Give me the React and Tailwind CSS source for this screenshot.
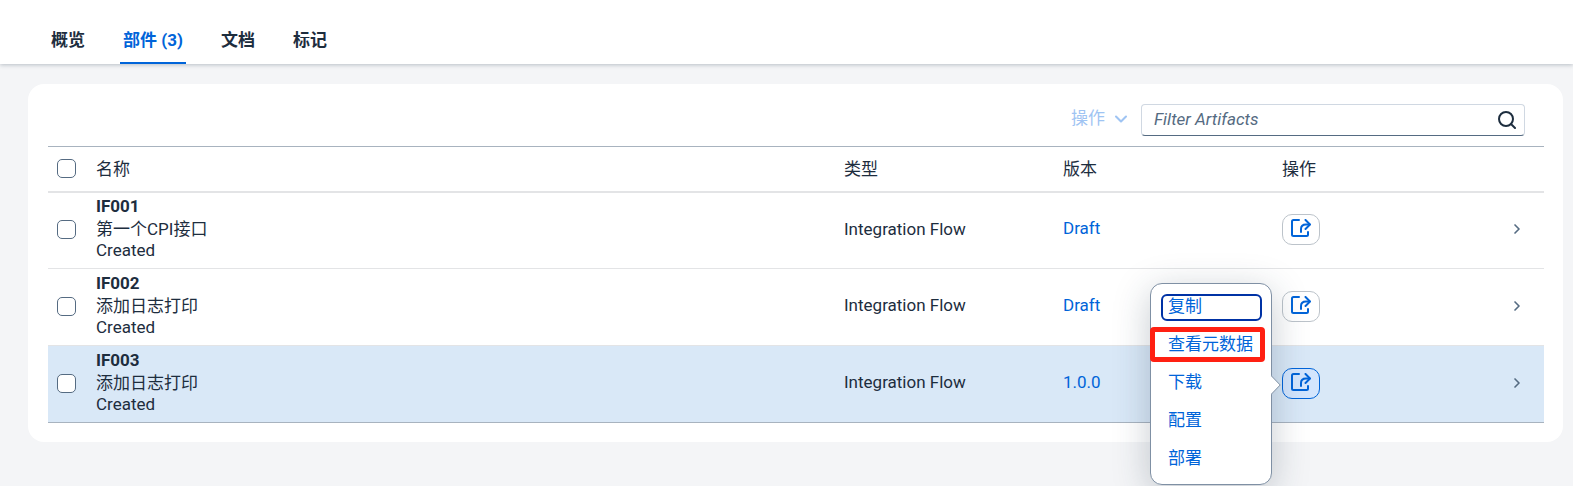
import React, { useState } from "react";
import { ChevronDown, ChevronRight } from "lucide-react";

const tabs = [
  { id: "overview", label: "概览" },
  { id: "artifacts", label: "部件 (3)" },
  { id: "documents", label: "文档" },
  { id: "tags", label: "标记" },
];

const artifacts = [
  { id: "IF001", description: "第一个CPI接口", status: "Created", type: "Integration Flow", version: "Draft" },
  { id: "IF002", description: "添加日志打印", status: "Created", type: "Integration Flow", version: "Draft" },
  { id: "IF003", description: "添加日志打印", status: "Created", type: "Integration Flow", version: "1.0.0" },
];

const menuItems = ["复制", "查看元数据", "下载", "配置", "部署"];

const ActionIcon = () => (
  <svg
    className="w-5 h-[18px]"
    viewBox="0 0 20 18"
    fill="none"
    stroke="currentColor"
    strokeWidth={2}
    strokeLinecap="round"
    strokeLinejoin="round"
  >
    <path d="M8 1H2.500A1.500 1.500 0 0 0 1 2.500V15.500A1.500 1.500 0 0 0 2.500 17H15.500A1.500 1.500 0 0 0 17 15.500V13" />
    <path d="M14.500 1L19 5.500L14.500 10" />
    <path d="M18.500 5.500H15C11.800 5.500 10 7.500 10 10V13" />
  </svg>
);

const SearchIcon = () => (
  <svg className="w-[18px] h-[18px]" viewBox="0 0 18 18" fill="none" stroke="currentColor" strokeWidth={2} strokeLinecap="round">
    <circle cx="8" cy="8" r="7" />
    <path d="M13 13l4 4" />
  </svg>
);

const Checkbox = ({ label }) => (
  <input
    type="checkbox"
    aria-label={label}
    className="block appearance-none w-[19px] h-[19px] ml-[9px] rounded-[5px] border border-[#556b82] bg-white checked:bg-[#0064d9]"
  />
);

const ActionMenu = () => (
  <div
    role="menu"
    className="absolute right-full -top-[85px] mr-[10px] z-10 w-[122px] rounded-xl border border-[#7f90a4] bg-white pt-[10px] pb-[11px] pl-[10px] pr-[9px] shadow-[0_8px_36px_rgba(34,53,72,0.26)]"
  >
    <ul className="flex flex-col gap-[11px]">
      {menuItems.map((item, index) => (
        <li key={item} className="relative">
          <button
            role="menuitem"
            className={`block w-full h-[27px] rounded-md border-2 px-[5px] pb-[3px] text-left leading-[20px] whitespace-nowrap text-[#0064d9] ${
              index === 0 ? "border-[#0032a5]" : "border-transparent"
            }`}
          >
            {item}
          </button>
          {index === 1 && (
            <span className="absolute -left-[11px] -right-[3px] -top-[5px] -bottom-[3px] rounded-[4px] border-[5px] border-[#ff2012] pointer-events-none" />
          )}
        </li>
      ))}
    </ul>
    {/* Arrow pointing at the opener */}
    <svg className="absolute left-full top-[91px] w-[10px] h-[20px]" viewBox="0 0 10 20">
      <path d="M0 0.500L9.200 10L0 19.500z" fill="#fff" />
      <path d="M0 0.500L9.200 10L0 19.500" fill="none" stroke="#7f90a4" />
    </svg>
  </div>
);

const App = () => {
  const [activeTab, setActiveTab] = useState("artifacts");
  const [openId, setOpenId] = useState("IF003");

  return (
    <div className="min-h-screen overflow-hidden bg-[#f4f5f7] text-[17px] text-[#1d2d3e] font-['Roboto','Noto_Sans_CJK_SC',sans-serif]">
      <header className="flex h-16 items-stretch gap-8 bg-white pl-12 shadow-[0_1px_4px_rgba(34,53,72,0.28)]">
        {tabs.map((tab) => (
          <button
            key={tab.id}
            onClick={() => setActiveTab(tab.id)}
            className={`border-b-2 px-[3px] pt-[19px] font-bold ${
              activeTab === tab.id ? "border-[#0064d9] text-[#0064d9]" : "border-transparent"
            }`}
          >
            {tab.label}
          </button>
        ))}
      </header>

      <main className="pt-5 pl-7 pr-[10px]">
        <section className="rounded-2xl bg-white pl-5 pr-[19px] pb-[19px]">
          <div className="flex h-[62px] items-center justify-end gap-[10px] pr-[19px] pt-[9px]">
            <button disabled className="flex items-center gap-[6px] pb-[2px] text-[#9fc4f3]">
              操作
              <ChevronDown className="w-5 h-5" strokeWidth={2.5} />
            </button>
            <div className="flex h-8 w-[384px] items-center rounded-[4px] border border-[#d0d8e2] border-b-[#556b82] px-2">
              <input
                type="text"
                aria-label="Filter Artifacts"
                placeholder="Filter Artifacts"
                className="flex-1 bg-transparent px-1 outline-none italic placeholder:text-[#556b82]"
              />
              <button aria-label="Search">
                <SearchIcon />
              </button>
            </div>
          </div>

          <table className="w-full table-fixed border-collapse border-y border-[#a8b3bf]">
            <thead>
              <tr className="h-[45px] border-b-2 border-[#e3e4e6] text-left">
                <th className="w-12 p-0">
                  <Checkbox label="Select all" />
                </th>
                <th className="p-0 pt-[2px] font-normal">名称</th>
                <th className="w-[219px] p-0 pt-[2px] font-normal">类型</th>
                <th className="w-[219px] p-0 pt-[2px] font-normal">版本</th>
                <th className="w-[219px] p-0 pt-[2px] font-normal">操作</th>
                <th className="w-[43px] p-0" />
              </tr>
            </thead>
            <tbody>
              {artifacts.map((artifact) => {
                const isOpen = openId === artifact.id;
                return (
                  <tr
                    key={artifact.id}
                    className={`h-[77px] border-b border-[#e3e4e6] last:border-[#a8b3bf] ${isOpen ? "bg-[#d9e8f7]" : ""}`}
                  >
                    <td className="p-0 pb-[2px]">
                      <Checkbox label={artifact.id} />
                    </td>
                    <td className="p-0 pb-[6px]">
                      <div className="font-bold leading-[22px]">{artifact.id}</div>
                      <div className="leading-[24px]">{artifact.description}</div>
                      <div className="leading-[18px]">{artifact.status}</div>
                    </td>
                    <td className="p-0 pb-[2px]">{artifact.type}</td>
                    <td className="p-0 pb-[3px]">
                      <a href="#version" className="text-[#0064d9]">{artifact.version}</a>
                    </td>
                    <td className="p-0 pb-[2px]">
                      <div className="relative w-[38px]">
                        <button
                          aria-label="操作"
                          onClick={() => setOpenId(isOpen ? null : artifact.id)}
                          className={`flex w-[38px] h-[31px] items-center justify-center rounded-[10px] border pb-[2px] text-[#0064d9] ${
                            isOpen ? "border-[#0064d9] bg-[#d3e5fd]" : "border-[#bcc3ca] bg-white"
                          }`}
                        >
                          <ActionIcon />
                        </button>
                        {isOpen && <ActionMenu />}
                      </div>
                    </td>
                    <td className="p-0 pb-[3px]">
                      <ChevronRight className="w-4 h-4 ml-2 text-[#556b82]" strokeWidth={2.5} />
                    </td>
                  </tr>
                );
              })}
            </tbody>
          </table>
        </section>
      </main>
    </div>
  );
};

export default App;
